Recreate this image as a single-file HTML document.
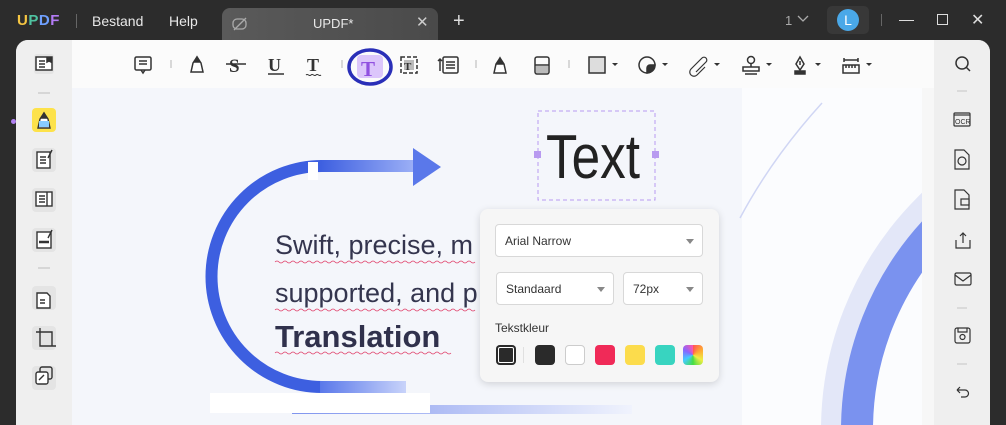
<!DOCTYPE html>
<html><head><meta charset="utf-8"><style>
*{margin:0;padding:0;box-sizing:border-box}
html,body{width:1006px;height:425px;overflow:hidden}
body{background:#2c2c2c;font-family:"Liberation Sans",sans-serif;position:relative}
.abs{position:absolute}
.t{color:#e8e8e8;font-size:14px}
.sel{border:1px solid #d8d8d8;border-radius:4px;background:#fff;position:absolute;font-size:12px;color:#333;padding-left:9px;display:flex;align-items:center}
.sel:after{content:"";position:absolute;right:8px;top:14px;border:4px solid transparent;border-top:5px solid #888}
.sw{position:absolute;top:345px;width:20px;height:20px;border-radius:4px}
</style></head><body>
<div class="abs" style="left:17px;top:12px;font-weight:bold;font-size:15px;letter-spacing:0.5px"><span style="color:#f5c542">U</span><span style="color:#4fc3a1">P</span><span style="color:#6fa0ff">D</span><span style="color:#b37bf5">F</span></div>
<div class="abs" style="left:76px;top:14px;width:1px;height:14px;background:#666"></div>
<div class="abs t" style="left:92px;top:13px">Bestand</div>
<div class="abs t" style="left:169px;top:13px">Help</div>
<div class="abs" style="left:222px;top:8px;width:216px;height:32px;border-radius:8px 8px 0 0;background:linear-gradient(90deg,#5a5a5a,#4a4a4a)"></div>
<svg class="abs" style="left:231px;top:16px" width="18" height="16"><rect x="2" y="3" width="13" height="10" rx="4" fill="none" stroke="#aaa" stroke-width="1.3"/><line x1="3" y1="14" x2="15" y2="2" stroke="#aaa" stroke-width="1.3"/></svg>
<div class="abs t" style="left:313px;top:16px;font-size:13px">UPDF*</div>
<div class="abs" style="left:416px;top:13px;color:#ccc;font-size:15px">✕</div>
<div class="abs" style="left:453px;top:10px;color:#ddd;font-size:20px">+</div>
<div class="abs" style="left:785px;top:13px;color:#aaa;font-size:13px">1</div>
<svg class="abs" style="left:797px;top:15px" width="12" height="8"><path d="M1 1 L6 6 L11 1" stroke="#aaa" fill="none" stroke-width="1.3"/></svg>
<div class="abs" style="left:827px;top:6px;width:42px;height:28px;border-radius:5px;background:#383838"></div>
<div class="abs" style="left:837px;top:9px;width:22px;height:22px;border-radius:50%;background:#4aa8e8;color:#fff;font-size:14px;text-align:center;line-height:22px">L</div>
<div class="abs" style="left:881px;top:14px;width:1px;height:12px;background:#666"></div>
<div class="abs" style="left:899px;top:20px;width:15px;height:1px;background:#ddd"></div>
<div class="abs" style="left:937px;top:14px;width:11px;height:11px;border:1.3px solid #ddd"></div>
<div class="abs" style="left:971px;top:10px;color:#ddd;font-size:16px">✕</div>
<div class="abs" style="left:16px;top:40px;width:974px;height:385px;background:#f7f7f7;border-radius:12px 12px 0 0;overflow:hidden">
  <div class="abs" style="left:0;top:0;width:56px;height:385px;background:#efefef"></div>
  <div class="abs" style="left:918px;top:0;width:56px;height:385px;background:#efefef"></div>
  <div class="abs" style="left:56px;top:0;width:862px;height:48px;background:#fbfbfb"></div>
</div>
<div class="abs" style="left:0;top:112px;width:16px;height:20px;border-radius:0 10px 10px 0;background:#2c2c2c"></div>
<div class="abs" style="left:11px;top:119px;width:5px;height:5px;border-radius:50%;background:#b080f0"></div>
<svg class="abs" style="left:0;top:40px" width="1006" height="50" fill="none" stroke="#333" stroke-width="1.5">
<rect x="34" y="14" width="20" height="20" rx="3" fill="#e4e4e4" stroke="none"/>
<rect x="36" y="17" width="16" height="13" fill="#fff"/><path d="M39 21h6M39 24h6M39 27h6"/><path d="M47 17v5l2-1 2 1v-5" fill="#333"/>
<rect x="135" y="17" width="16" height="13" rx="1.5"/><path d="M139 21h8M139 24h8M141 30l2 3 2-3"/>
<path d="M171 20v8" stroke="#ccc"/>
<path d="M191 32l2-9 4-6 4 6 2 9z" fill="#fff"/><path d="M194 22l3-5 3 5z" fill="#333"/>
<text x="229" y="32" font-size="19" font-family="Liberation Serif" font-weight="bold" fill="#333" stroke="none">S</text><path d="M226 24h20"/>
<text x="268" y="31" font-size="18" font-family="Liberation Serif" font-weight="bold" fill="#333" stroke="none">U</text><path d="M268 34h16"/>
<text x="307" y="31" font-size="18" font-family="Liberation Serif" font-weight="bold" fill="#333" stroke="none">T</text><path d="M306 35c2-2 3 2 5 0s3 2 5 0 3 2 5 0" stroke-width="1"/>
<path d="M342 20v8" stroke="#ccc"/>
<rect x="357" y="15" width="26" height="23" rx="4" fill="#dcc6fb" stroke="none"/>
<ellipse cx="370" cy="27" rx="21" ry="17" stroke="#2a2fb8" stroke-width="3.5"/>
<text x="361" y="36" font-size="21" font-family="Liberation Serif" font-weight="bold" fill="#9050e0" stroke="none">T</text>
<rect x="401" y="17" width="16" height="16" stroke-dasharray="4 2"/><rect x="404" y="20" width="10" height="10" fill="#bbb" stroke="none"/><text x="404" y="30" font-size="11" font-weight="bold" font-family="Liberation Serif" fill="#333" stroke="none">T</text>
<rect x="443" y="17" width="15" height="16" rx="1.5"/><path d="M446 22h9M446 25h9M446 28h9M440 19v12M438 21l2-2 2 2"/>
<path d="M476 20v8" stroke="#ccc"/>
<path d="M494 33l2-9 4-6 4 6 2 9z" fill="#fff"/><path d="M497 24l3-6 3 6z" fill="#333"/>
<rect x="535" y="17" width="14" height="17" rx="2"/><rect x="536" y="26" width="12" height="7" fill="#bbb" stroke="none"/><path d="M535 25h14"/>
<path d="M569 20v8" stroke="#ccc"/>
<rect x="589" y="17" width="16" height="16" fill="#ddd"/><path d="M612 23l3 3 3-3z" fill="#333" stroke="none"/>
<circle cx="647" cy="25" r="8"/><path d="M647 33a8 8 0 0 0 8-8h-5a3 3 0 0 0-3 3z" fill="#333"/><path d="M662 23l3 3 3-3z" fill="#333" stroke="none"/>
<path d="M696 32l10-10a2.5 2.5 0 0 0-4-4l-11 11a4 4 0 0 0 6 6l8-8" stroke-width="1.2"/><path d="M714 23l3 3 3-3z" fill="#333" stroke="none"/>
<circle cx="751" cy="20" r="3.5"/><path d="M751 24v3M743 27h16v4h-16zM745 34h12"/><path d="M766 23l3 3 3-3z" fill="#333" stroke="none"/>
<path d="M800 17l-4 7 4 6 4-6z M800 21v4"/><path d="M795 31h10v3h-10z" fill="#333"/><path d="M815 23l3 3 3-3z" fill="#333" stroke="none"/>
<path d="M844 20h14M844 18v4M858 18v4"/><rect x="843" y="25" width="16" height="8"/><path d="M846 25v3M849 25v3M852 25v3M855 25v3"/><path d="M866 23l3 3 3-3z" fill="#333" stroke="none"/>
<circle cx="962" cy="23" r="6"/><path d="M966 27l4 4"/>
</svg>
<div class="abs" style="left:72px;top:88px;width:850px;height:337px;overflow:hidden;background:#f4f6fb">
  <div class="abs" style="left:670px;top:0;width:180px;height:337px;background:#fbfcfe"></div>
  <svg class="abs" style="left:0;top:0" width="850" height="337">
    <defs>
      <linearGradient id="g1" x1="0" x2="1"><stop offset="0" stop-color="#3d5fe0"/><stop offset="1" stop-color="#9fb2f7"/></linearGradient>
      <linearGradient id="g2" x1="0" x2="1"><stop offset="0" stop-color="#5a78ea"/><stop offset="1" stop-color="#c8d3fa"/></linearGradient>
      <linearGradient id="g3" x1="0" x2="1"><stop offset="0" stop-color="#7f94ee"/><stop offset="1" stop-color="#f0f3fd"/></linearGradient>
    </defs>
    <circle cx="1078" cy="342" r="312" fill="none" stroke="#e3e7f8" stroke-width="34"/>
    <path d="M750 15 Q700 70 668 130" stroke="#d0d6f4" stroke-width="1.5" fill="none"/>
    <circle cx="1078" cy="342" r="293" fill="none" stroke="#7a92ef" stroke-width="32"/>
    <rect x="220" y="317" width="340" height="9" fill="url(#g3)"/>
    <path d="M250 78 A110 110 0 0 0 250 299" stroke="#3d5fe0" stroke-width="12" fill="none"/>
    <rect x="248" y="72" width="97" height="12" fill="url(#g1)"/>
    <polygon points="341,60 369,79 341,98" fill="#5a78ea"/>
    <rect x="248" y="293" width="86" height="12" fill="url(#g2)"/>
    <rect x="138" y="305" width="220" height="20" fill="#fff"/>
    <rect x="236" y="74" width="10" height="18" fill="#fff"/>
    <g fill="none" stroke="#e0406a" stroke-width="0.8">
      <path d="M203 174 q2 -2 4 0 t4 0 t4 0 t4 0 t4 0 t4 0 t4 0 t4 0 t4 0 t4 0 t4 0 t4 0 t4 0 t4 0 t4 0 t4 0 t4 0 t4 0 t4 0 t4 0 t4 0 t4 0 t4 0 t4 0 t4 0 t4 0 t4 0 t4 0 t4 0 t4 0 t4 0 t4 0 t4 0 t4 0 t4 0 t4 0 t4 0 t4 0 t4 0 t4 0 t4 0 t4 0 t4 0 t4 0 t4 0 t4 0 t4 0 t4 0 t4 0 t4 0"/>
      <path d="M203 222 q2 -2 4 0 t4 0 t4 0 t4 0 t4 0 t4 0 t4 0 t4 0 t4 0 t4 0 t4 0 t4 0 t4 0 t4 0 t4 0 t4 0 t4 0 t4 0 t4 0 t4 0 t4 0 t4 0 t4 0 t4 0 t4 0 t4 0 t4 0 t4 0 t4 0 t4 0 t4 0 t4 0 t4 0 t4 0 t4 0 t4 0 t4 0 t4 0 t4 0 t4 0 t4 0 t4 0 t4 0 t4 0 t4 0 t4 0 t4 0 t4 0 t4 0 t4 0"/>
      <path d="M203 265 q2 -2 4 0 t4 0 t4 0 t4 0 t4 0 t4 0 t4 0 t4 0 t4 0 t4 0 t4 0 t4 0 t4 0 t4 0 t4 0 t4 0 t4 0 t4 0 t4 0 t4 0 t4 0 t4 0 t4 0 t4 0 t4 0 t4 0 t4 0 t4 0 t4 0 t4 0 t4 0 t4 0 t4 0 t4 0 t4 0 t4 0 t4 0 t4 0 t4 0 t4 0 t4 0 t4 0 t4 0 t4 0"/>
    </g>
    <text x="203" y="166" font-size="27" fill="#34354e" font-family="Liberation Sans">Swift, precise, m</text>
    <text x="203" y="214" font-size="27" fill="#34354e" font-family="Liberation Sans">supported, and p</text>
    <text x="203" y="259" font-size="31" font-weight="bold" fill="#30314c" font-family="Liberation Sans">Translation</text>
    <rect x="466" y="23" width="117" height="89" fill="none" stroke="#b89af0" stroke-dasharray="4 3"/>
    <rect x="462" y="63" width="7" height="7" fill="#b89af0"/><rect x="580" y="63" width="7" height="7" fill="#b89af0"/>
    <text x="474" y="90" font-size="62" fill="#222" font-family="Liberation Sans" textLength="94" lengthAdjust="spacingAndGlyphs">Text</text>
  </svg>
</div>
<div class="abs" style="left:480px;top:209px;width:239px;height:173px;background:#f6f6f6;border-radius:8px;box-shadow:0 2px 8px rgba(0,0,0,.15)"></div>
<div class="sel" style="left:495px;top:224px;width:208px;height:33px">Arial Narrow</div>
<div class="sel" style="left:496px;top:272px;width:118px;height:33px">Standaard</div>
<div class="sel" style="left:623px;top:272px;width:80px;height:33px">72px</div>
<div class="abs" style="left:495px;top:321px;font-size:12px;color:#333">Tekstkleur</div>
<div class="sw" style="left:496px;background:#2a2a2a;box-shadow:inset 0 0 0 2px #2a2a2a,inset 0 0 0 3px #fff"></div>
<div class="abs" style="left:523px;top:347px;width:1px;height:16px;background:#e0e0e0"></div>
<div class="sw" style="left:535px;background:#2a2a2a"></div>
<div class="sw" style="left:565px;background:#fff;border:1px solid #ccc"></div>
<div class="sw" style="left:595px;background:#f02a58"></div>
<div class="sw" style="left:625px;background:#fcdc4c"></div>
<div class="sw" style="left:655px;background:#38d4c0"></div>
<div class="sw" style="left:683px;background:conic-gradient(#f55 0,#fa3,#ee4,#4d4,#4cf,#86f,#f5a)"></div>
<svg class="abs" style="left:16px;top:88px" width="56" height="337" fill="none" stroke="#333" stroke-width="1.4">
<path d="M22 5h12" stroke="#ccc"/>
<rect x="16" y="20" width="24" height="24" rx="4" fill="#fde24a" stroke="none"/>
<path d="M22 40l2-9 4-6 4 6 2 9z" fill="#fff"/><path d="M25 30l3-5 3 5z" fill="#333"/><rect x="23" y="33" width="10" height="6" fill="#8cf" stroke="none"/>
<rect x="16" y="60" width="24" height="24" rx="4" fill="#e4e4e4" stroke="none"/><rect x="21" y="64" width="13" height="16" fill="#fff"/><path d="M24 69h6M24 72h6M24 75h6M36 62l-4 8"/>
<rect x="16" y="100" width="24" height="24" rx="4" fill="#e4e4e4" stroke="none"/><rect x="20" y="104" width="16" height="14" fill="#fff"/><path d="M23 108h6M23 111h6M23 114h6M31 104v14"/>
<rect x="16" y="140" width="24" height="24" rx="4" fill="#e4e4e4" stroke="none"/><rect x="21" y="144" width="14" height="16" fill="#fff"/><path d="M23 154h10" stroke-width="2.5"/><path d="M36 142l-4 8"/>
<path d="M22 180h12" stroke="#ccc"/>
<rect x="16" y="198" width="24" height="24" rx="4" fill="#e4e4e4" stroke="none"/><path d="M21 205h10l3 3v12h-13z" fill="#fff"/><path d="M24 212h5M24 215h5"/>
<rect x="16" y="238" width="24" height="24" rx="4" fill="#e4e4e4" stroke="none"/><path d="M20 244h16v14M24 240v18h16"/>
<rect x="16" y="278" width="24" height="24" rx="4" fill="#e4e4e4" stroke="none"/><rect x="24" y="279" width="12" height="12" rx="2"/><rect x="20" y="284" width="12" height="12" rx="2" fill="#fff"/><path d="M23 292l5-5"/>
</svg>
<svg class="abs" style="left:934px;top:88px" width="56" height="337" fill="none" stroke="#333" stroke-width="1.2">
<path d="M23 3h10" stroke="#ccc"/>
<rect x="20" y="25" width="16" height="13" rx="1"/><path d="M20 27h16"/><text x="21" y="36" font-size="7" fill="#333" stroke="none" font-family="Liberation Sans">OCR</text>
<path d="M21 62h9l5 5v14h-14z"/><circle cx="28" cy="73" r="4"/>
<path d="M21 102h9l5 5v14h-14z"/><rect x="27" y="111" width="8" height="6" fill="#efefef"/>
<path d="M22 152v8h14v-8M29 145v10M26 148l3-3 3 3"/>
<rect x="21" y="185" width="16" height="12" rx="1.5"/><path d="M21 187l8 6 8-6"/>
<path d="M23 220h10" stroke="#ccc"/>
<rect x="21" y="240" width="15" height="15" rx="2"/><circle cx="28.5" cy="249" r="2.5"/><path d="M24 240v4h9v-4"/>
<path d="M23 276h10" stroke="#ccc"/>
<path d="M23 302h8a3.5 3.5 0 0 1 0 7h-4M23 302l3-3M23 302l3 3"/>
</svg>
</body></html>
